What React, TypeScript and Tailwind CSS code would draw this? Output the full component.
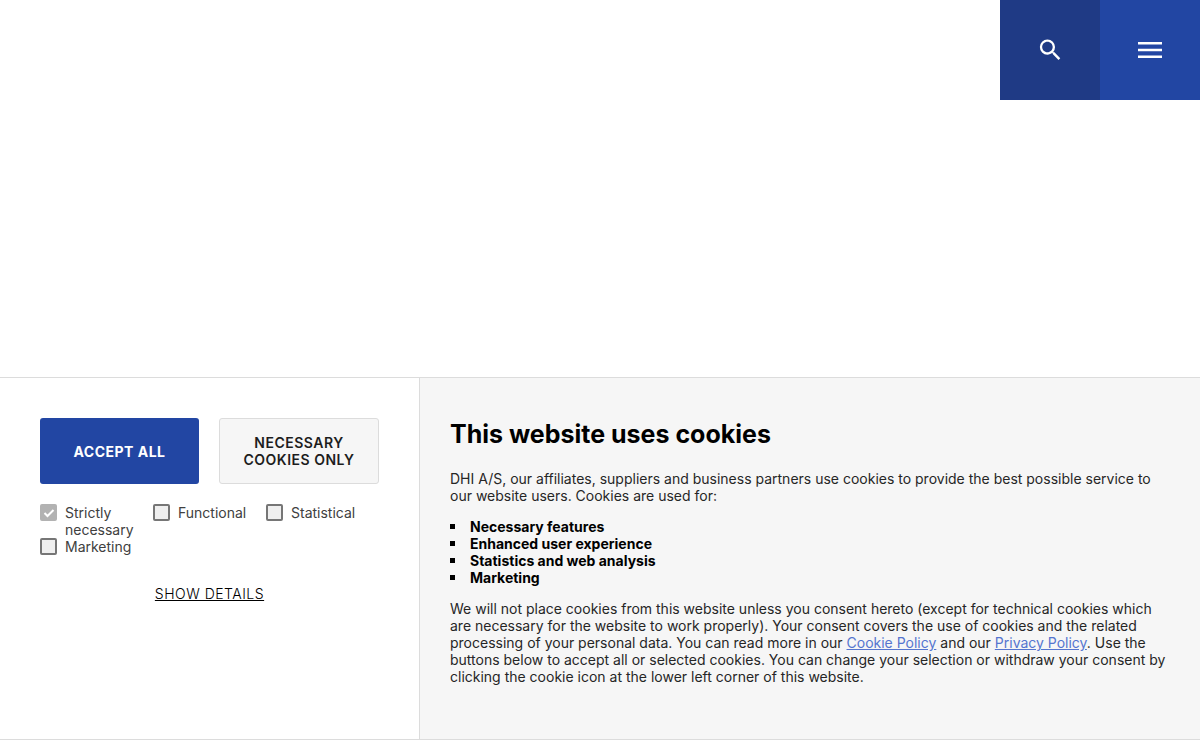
import { useState } from "react";

// ==================== Cookie Data ====================

interface CookieCategory {
  id: string;
  label: string;
  locked?: boolean;
}

const CATEGORIES: CookieCategory[] = [
  { id: "necessary", label: "Strictly necessary", locked: true },
  { id: "functional", label: "Functional" },
  { id: "statistical", label: "Statistical" },
  { id: "marketing", label: "Marketing" },
];

const PURPOSES = [
  "Necessary features",
  "Enhanced user experience",
  "Statistics and web analysis",
  "Marketing",
];

// ==================== Header ====================

function Header() {
  return (
    <header className="flex justify-end">
      <button
        type="button"
        aria-label="Search"
        className="flex size-[100px] items-center justify-center bg-[#1f3a85] text-white"
      >
        <svg viewBox="-0.3 0 24 24" className="size-7" fill="currentColor" aria-hidden="true">
          <path d="M15.5 14h-.79l-.28-.27A6.47 6.47 0 0 0 16 9.5 6.5 6.5 0 1 0 9.5 16c1.61 0 3.09-.59 4.23-1.57l.27.28v.79l5 4.99L20.49 19l-4.99-5zm-6 0C7.01 14 5 11.99 5 9.5S7.01 5 9.5 5 14 7.01 14 9.5 11.99 14 9.5 14z" />
        </svg>
      </button>
      <button
        type="button"
        aria-label="Menu"
        className="flex size-[100px] items-center justify-center bg-[#2246a3] text-white"
      >
        <svg viewBox="0 0 24 16" className="h-4 w-6" fill="currentColor" aria-hidden="true">
          <path d="M0 0h24v2.5H0zM0 6.75h24v2.5H0zM0 13.5h24V16H0z" />
        </svg>
      </button>
    </header>
  );
}

// ==================== Consent Options ====================

function ConsentOptions() {
  const [accepted, setAccepted] = useState<string[]>(["necessary"]);

  const toggle = (id: string) =>
    setAccepted((prev) => (prev.includes(id) ? prev.filter((a) => a !== id) : [...prev, id]));

  return (
    <div className="w-[35%] shrink-0 border-r border-[#dcdcdc] p-10">
      <div className="grid grid-cols-[159fr_160fr] gap-5">
        <button
          type="button"
          onClick={() => setAccepted(CATEGORIES.map((c) => c.id))}
          className="min-h-[66px] rounded-[3px] bg-[#2246a3] px-4 font-bold tracking-[0.5px] text-white"
        >
          ACCEPT ALL
        </button>
        <button
          type="button"
          onClick={() => setAccepted(["necessary"])}
          className="min-h-[66px] rounded-[3px] border border-[#dcdcdc] bg-[#f6f6f6] px-4 font-semibold tracking-[0.5px] text-[#1d1d1d]"
        >
          NECESSARY COOKIES ONLY
        </button>
      </div>

      <div className="mt-5 grid grid-cols-3">
        {CATEGORIES.map((c) => (
          <label key={c.id} className="flex items-start gap-2 pr-3 font-normal text-[#404040]">
            <span className="grid shrink-0">
              <input
                type="checkbox"
                checked={accepted.includes(c.id)}
                disabled={c.locked}
                onChange={() => toggle(c.id)}
                className="peer col-start-1 row-start-1 size-[17px] appearance-none rounded-[2px] border-2 border-[#767676] bg-[#efefef] checked:border-[#2246a3] checked:bg-[#2246a3] disabled:border-[#b2b2b2] disabled:bg-[#b2b2b2]"
              />
              <svg
                viewBox="0 0 17 17"
                className="pointer-events-none invisible col-start-1 row-start-1 size-[17px] peer-checked:visible"
                fill="none"
                stroke="white"
                strokeWidth="2"
                aria-hidden="true"
              >
                <path d="M4.5 9l3 3L13.5 6" />
              </svg>
            </span>
            {c.label}
          </label>
        ))}
      </div>

      <div className="mt-[30px] text-center">
        <button type="button" className="tracking-[0.5px] underline">
          SHOW DETAILS
        </button>
      </div>
    </div>
  );
}

// ==================== Page ====================

export default function App() {
  return (
    <div className="flex min-h-screen flex-col justify-between bg-white font-['Inter','Liberation_Sans',sans-serif]">
      <Header />

      <section
        aria-labelledby="cookie-title"
        className="flex border-y border-[#dcdcdc] text-sm/[17px] font-light text-black"
      >
        <ConsentOptions />

        <div className="flex-1 bg-[#f6f6f6] px-[30px] py-10 font-normal">
          <h2 id="cookie-title" className="mb-5 text-[25px]/[32px] font-bold">
            This website uses cookies
          </h2>
          <p className="mb-3.5 text-[#262626]">
            DHI A/S, our affiliates, suppliers and business partners use cookies to provide the best
            possible service to our website users. Cookies are used for:
          </p>
          <ul className="mb-3.5 font-bold">
            {PURPOSES.map((p) => (
              <li key={p} className="flex items-center gap-[15px]">
                <span className="size-[5px] bg-black" />
                {p}
              </li>
            ))}
          </ul>
          <p className="mb-3.5 text-[#262626]">
            We will not place cookies from this website unless you consent hereto (except for
            technical cookies which are necessary for the website to work properly). Your consent
            covers the use of cookies and the related processing of your personal data. You can read
            more in our{" "}
            <a href="#cookie-policy" className="text-[#5575cf] underline">
              Cookie Policy
            </a>{" "}
            and our{" "}
            <a href="#privacy-policy" className="text-[#5575cf] underline">
              Privacy Policy
            </a>
            . Use the buttons below to accept all or selected cookies. You can change your selection
            or withdraw your consent by clicking the cookie icon at the lower left corner of this
            website.
          </p>
        </div>
      </section>
    </div>
  );
}
